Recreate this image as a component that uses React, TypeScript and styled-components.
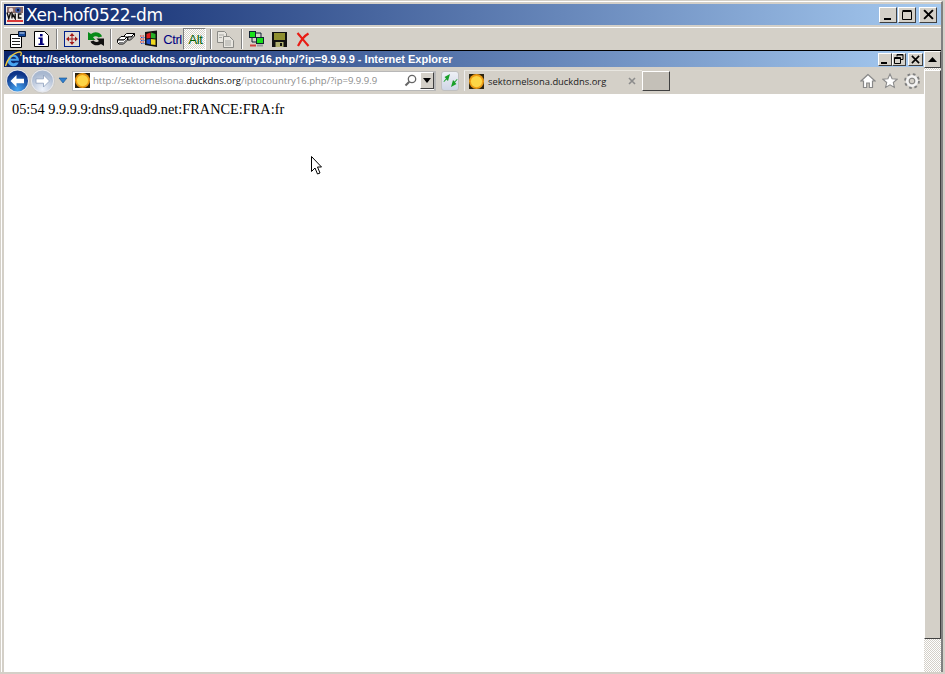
import React from 'react';
import styled, { createGlobalStyle } from 'styled-components';

const GlobalStyle = createGlobalStyle`
  html, body { margin: 0; padding: 0; background: #d4d0c8; overflow: hidden; }
  #root { width: 945px; height: 674px; }
`;

const face = '#d4d0c8';

const Frame = styled.div`
  width: 945px;
  height: 674px;
  box-sizing: border-box;
  padding: 1px 2px 2px 1px;
  background: ${face};
  display: flex;
  flex-direction: column;
  position: relative;
  overflow: hidden;
`;

const Window = styled.div`
  flex: 1;
  min-height: 0;
  display: flex;
  flex-direction: column;
  border-top: 1px solid #fff;
  border-left: 1px solid #fff;
  border-right: 2px solid #808080;
  padding: 2px 0 0 2px;
`;

const TitleBar = styled.div`
  height: 21px;
  flex: none;
  display: flex;
  align-items: center;
  padding: 0 4px 0 2px;
  gap: 2px;
  background: linear-gradient(90deg, #0a246a 0%, #a6caf0 100%);
`;

const TitleText = styled.div`
  flex: 1;
  color: #fff;
  font: 17px 'DejaVu Sans', sans-serif;
  letter-spacing: -0.4px;
  white-space: nowrap;
`;

const WinBtn = styled.div<{ $w: number; $h: number; $gapLeft?: number }>`
  width: ${(p) => p.$w}px;
  height: ${(p) => p.$h}px;
  margin-left: ${(p) => p.$gapLeft ?? 0}px;
  flex: none;
  box-sizing: border-box;
  background: ${face};
  border: 1px solid;
  border-color: #fff #404040 #404040 #fff;
  display: flex;
  align-items: center;
  justify-content: center;
`;

const BtnRow = styled.div<{ $gap: number }>`
  display: flex;
  gap: ${(p) => p.$gap}px;
`;

const Toolbar = styled.div`
  height: 23px;
  flex: none;
  margin-top: 2px;
  border-top: 1px solid #fff;
  display: flex;
  align-items: center;
  padding-left: 2px;
  box-sizing: border-box;
`;

const ToolSlot = styled.div`
  width: 23px;
  height: 22px;
  flex: none;
  display: flex;
  align-items: center;
  justify-content: center;
`;

const Separator = styled.div`
  width: 2px;
  height: 20px;
  margin: 0 2px 0 4px;
  flex: none;
  border-left: 1px solid #808080;
  border-right: 1px solid #fff;
  box-sizing: border-box;
`;

const KeyLabel = styled.span<{ $color: string }>`
  font: 13px 'Liberation Sans', sans-serif;
  color: ${(p) => p.$color};
  letter-spacing: -0.4px;
  margin-left: 2px;
`;

const ActiveKey = styled(ToolSlot)`
  border: 1px solid;
  border-color: #808080 #fff #fff #808080;
  box-sizing: border-box;
  background-color: #fff;
  background-image: conic-gradient(${face} 25%, #fff 0 50%, ${face} 0 75%, #fff 0);
  background-size: 2px 2px;
`;

const Body = styled.div`
  flex: 1;
  min-height: 0;
  display: flex;
  border-top: 1px solid #000;
`;

const Browser = styled.div`
  flex: 1;
  min-width: 0;
  display: flex;
  flex-direction: column;
`;

const InnerTitle = styled.div`
  height: 16px;
  flex: none;
  display: flex;
  align-items: center;
  padding: 0 1px 0 1px;
  background: linear-gradient(90deg, #0a246a 0%, #a6caf0 100%);
`;

const InnerTitleText = styled.div`
  flex: 1;
  color: #fff;
  font: bold 11px 'Liberation Sans', sans-serif;
  white-space: nowrap;
`;

const NavBar = styled.div`
  height: 27px;
  flex: none;
  display: flex;
  align-items: center;
  padding-left: 1px;
`;

const AddressBox = styled.div`
  width: 364px;
  height: 20px;
  margin-left: 4px;
  flex: none;
  box-sizing: border-box;
  background: #fff;
  border: 1px solid #b8b8b8;
  border-right-width: 2px;
  display: flex;
  align-items: center;
  padding-left: 2px;
`;

const AddressText = styled.div`
  flex: 1;
  margin-left: 3px;
  font: 9.52px 'Open Sans', sans-serif;
  color: #8c8c8c;
  white-space: nowrap;
  b { font-weight: normal; color: #111; }
`;

const DropArrow = styled.div`
  width: 14px;
  height: 17px;
  flex: none;
  box-sizing: border-box;
  background: ${face};
  border: 1px solid;
  border-color: #fff #404040 #404040 #fff;
  display: flex;
  align-items: center;
  justify-content: center;
`;

const RefreshBtn = styled.div`
  width: 18px;
  height: 20px;
  margin-left: 5px;
  flex: none;
  box-sizing: border-box;
  border: 1px solid #c0c0c0;
  border-radius: 3px;
  background: linear-gradient(#eef0f6, #cfd6e6);
  display: flex;
  align-items: center;
  justify-content: center;
`;

const Tab = styled.div`
  width: 178px;
  height: 21px;
  margin-left: 5px;
  flex: none;
  box-sizing: border-box;
  border-left: 1px solid #eee;
  border-top: 1px solid #e8e6e0;
  display: flex;
  align-items: center;
  padding-left: 4px;
`;

const TabLabel = styled.div`
  flex: 1;
  margin-left: 4px;
  font: 9.4px 'Open Sans', sans-serif;
  color: #222;
  white-space: nowrap;
`;

const TabClose = styled.div`
  flex: none;
  margin-right: 6px;
  display: flex;
`;

const NewTab = styled.div`
  width: 28px;
  height: 20px;
  flex: none;
  box-sizing: border-box;
  background: #c4c0b8;
  border: 1px solid;
  border-color: #fff #404040 #404040 #fff;
`;

const NavRight = styled.div`
  flex: 1;
  display: flex;
  justify-content: flex-end;
  align-items: center;
  gap: 6px;
  padding-right: 4px;
`;

const Content = styled.div`
  flex: 1;
  background: #fff;
  padding: 7px 8px;
  font: 14.33px 'Liberation Serif', serif;
  color: #000;
  white-space: nowrap;
`;

const Scrollbar = styled.div`
  width: 17px;
  flex: none;
  display: flex;
  flex-direction: column;
  background-color: #fff;
  background-image: conic-gradient(${face} 25%, #fff 0 50%, ${face} 0 75%, #fff 0);
  background-size: 2px 2px;
`;

const ScrollUp = styled.div`
  height: 17px;
  flex: none;
  box-sizing: border-box;
  background: ${face};
  border: 1px solid;
  border-color: #fff #404040 #404040 #fff;
  display: flex;
  align-items: center;
  justify-content: center;
`;

const ScrollThumb = styled.div`
  height: 569px;
  margin-top: 2px;
  flex: none;
  box-sizing: border-box;
  background: ${face};
  border: 1px solid;
  border-color: #fff #404040 #404040 #fff;
`;

const Cursor = styled.svg`
  position: absolute;
  left: 310px;
  top: 155px;
`;

function MinGlyph({ w }: { w: number }) {
  return (
    <svg width="12" height="12" viewBox="0 0 12 12">
      <rect x="2" y="9" width={w} height="2" fill="#000" />
    </svg>
  );
}

function MaxGlyph() {
  return (
    <svg width="12" height="12" viewBox="0 0 12 12">
      <path d="M1.500 2.500h9v8h-9z M1.500 1.500h9" fill="none" stroke="#000" />
    </svg>
  );
}

function RestoreGlyph() {
  return (
    <svg width="10" height="10" viewBox="0 0 10 10">
      <path d="M3 2.500V.5h6v5H7 M3 1h6" fill="none" stroke="#000" />
      <path d="M.5 3.500h6v6h-6zM.5 4.500h6" fill="none" stroke="#000" />
    </svg>
  );
}

function CloseGlyph({ s }: { s: number }) {
  return (
    <svg width={s} height={s} viewBox="0 0 10 10">
      <path d="M1 1l8 8M9 1l-8 8" stroke="#000" strokeWidth="1.800" />
    </svg>
  );
}

function CloseGlyphGrey() {
  return (
    <svg width="8" height="8" viewBox="0 0 8 8">
      <path d="M1 1l6 6M7 1L1 7" stroke="#8c8c8c" strokeWidth="1.600" />
    </svg>
  );
}

function Sun() {
  return (
    <svg width="15" height="15" viewBox="0 0 16 16">
      <rect width="16" height="16" fill="#2c2410" />
      <circle cx="8" cy="8" r="8" fill="#eb9a14" />
      <circle cx="8" cy="8" r="6" fill="#fdd646" />
    </svg>
  );
}

function VncLogo() {
  return (
    <svg width="18" height="18" viewBox="0 0 18 18">
      <rect width="18" height="18" fill="#f0ece8" />
      <rect x="1" y="1" width="16" height="6" fill="#8c6c68" />
      <circle cx="5" cy="4" r="2.200" fill="#e8d8d8" />
      <circle cx="12" cy="4" r="2.800" fill="#3858a8" />
      <circle cx="12" cy="4" r="1.200" fill="#101828" />
      <path d="M1 6.500l1.800 6 1.800-6M6 12.500v-5l3.200 5v-5M15.500 8H12.500v4h3" fill="none" stroke="#111" strokeWidth="1.400" />
      <rect x="1" y="14" width="16" height="2" fill="#d83838" />
    </svg>
  );
}

function PropsIcon() {
  return (
    <svg width="17" height="17" viewBox="0 0 17 17">
      <path d="M1.500 3.500h11v13h-11z" fill="#fff" stroke="#000" />
      <path d="M3 7.500h8M3 10.500h8M3 13.500h8" stroke="#222" />
      <path d="M9.500 .5h7v5h-7z" fill="#144a9e" stroke="#0a1a38" />
      <path d="M10.500 2h5" stroke="#d8e4f4" />
    </svg>
  );
}

function InfoIcon() {
  return (
    <svg width="15" height="16" viewBox="0 0 15 16" style={{ marginLeft: 2 }}>
      <path d="M.5 .5h10l4 4v11H.5z" fill="#fff" stroke="#000" />
      <rect x="6" y="3" width="2.600" height="2.400" fill="#00007a" />
      <path d="M4.500 6.500h4.200v6h1.500v1.500H4.500v-1.500H6V8H4.500z" fill="#00007a" />
    </svg>
  );
}

function FitIcon() {
  return (
    <svg width="16" height="16" viewBox="0 0 16 16">
      <rect x="0.500" y="0.500" width="15" height="15" fill="#e0dcd8" stroke="#00208a" />
      <path d="M8 2l2.500 3h-5zM8 14l2.500-3h-5zM2 8l3-2.500v5zM14 8l-3-2.500v5z" fill="#a01818" />
      <path d="M8 5v6M5 8h6" stroke="#a01818" />
    </svg>
  );
}

function ReloadIcon() {
  return (
    <svg width="18" height="16" viewBox="0 0 18 16" style={{ marginLeft: 2 }}>
      <path d="M15 5.500A6.500 5.500 0 0 0 4 3L1 1v8h7.500L6 6.200A3.500 3 0 0 1 11.500 6.500z" fill="#088a18" />
      <path d="M3.500 10.500a6.500 5.500 0 0 0 10.500 2.500l3 2V7.500h-7.500L12 10a3.500 3 0 0 1-5.500-.5z" fill="#111" />
    </svg>
  );
}

function KeysIcon() {
  return (
    <svg width="18" height="13" viewBox="0 0 18 13">
      <path d="M.5 7L4 3.500h6.500L7 7z" fill="#fff" stroke="#000" />
      <path d="M.5 7v2.500l1.500 1.500h4.500L10.500 7V3.500L7 7z" fill="#fff" stroke="#000" />
      <path d="M2 9.500h4.500L9.500 6.500" fill="none" stroke="#777" />
      <path d="M7 3l2.500-2.500h8L14 4H8z" fill="#fff" stroke="#000" />
      <path d="M11 4v3h2.500l4-4V.5L14 4z" fill="#fff" stroke="#000" />
      <path d="M12.500 5.500h1l2.500-2.500" fill="none" stroke="#777" />
    </svg>
  );
}

function StartIcon() {
  return (
    <svg width="18" height="18" viewBox="0 0 18 18">
      <path d="M5 2l12-1.500V17L5 15z" fill="#111" />
      <path d="M6.500 4l4-1.500v5.500l-4 .5z" fill="#e01e1e" />
      <path d="M11 2.500L15.500 4v4.500L11 8z" fill="#28b028" />
      <path d="M6.500 9.500L10.500 9v5.500l-4-1z" fill="#2050c8" />
      <path d="M11 9l4.500.5V15L11 14.500z" fill="#f0d820" />
      <path d="M0 6h4.500M0 9h4.500M0 12h4.500" stroke="#e01e1e" strokeWidth="1.200" strokeDasharray="1.500 1" />
      <path d="M1 7.500h3.500M1 10.500h3.500M1 13.500h3.500" stroke="#2050c8" strokeDasharray="1.500 1" />
    </svg>
  );
}

function CopyIcon() {
  return (
    <svg width="17" height="17" viewBox="0 0 17 17">
      <path d="M.5 .5h7l2 2v9h-9z" fill="#e8e6e0" stroke="#8a8a86" />
      <path d="M6.500 5.500h6l4 4v7h-10z" fill="#e8e6e0" stroke="#8a8a86" />
      <path d="M2 4h5M2 6.500h3M8 10h6M8 12h6M8 14h6" stroke="#a8a8a4" />
    </svg>
  );
}

function TransferIcon() {
  return (
    <svg width="17" height="17" viewBox="0 0 17 17">
      <rect x="1.500" y="0.500" width="6" height="6" fill="#19e019" stroke="#123" />
      <rect x="8.500" y="6.500" width="7" height="6" fill="#19e019" stroke="#123" />
      <path d="M8 2h5v4M8 11H4V7" fill="none" stroke="#123" />
      <path d="M2 14.500h6" stroke="#d04040" strokeWidth="2" />
      <path d="M9 14.500h6" stroke="#9a9a9a" strokeWidth="2" />
    </svg>
  );
}

function SaveIcon() {
  return (
    <svg width="15" height="15" viewBox="0 0 15 15">
      <path d="M0 0h15v15H0z" fill="#111" />
      <path d="M2 1h11v7H2z" fill="#8f8f30" />
      <path d="M3.500 10h8v5h-8z" fill="#b0b070" />
      <path d="M8 11h2v3H8z" fill="#111" />
    </svg>
  );
}

function RedX() {
  return (
    <svg width="14" height="15" viewBox="0 0 14 15">
      <path d="M1.500 1C5 5 8 9 12.500 14M12.500 1.500C8 4 4.500 9 2 14" fill="none" stroke="#e81c14" strokeWidth="2.200" />
    </svg>
  );
}

function IeLogo() {
  return (
    <svg width="17" height="16" viewBox="0 0 17 16">
      <path d="M8.500 3.500a5.800 5.800 0 1 0 5.200 8h-3a3.200 3.200 0 0 1-5-1.800h8.300A6 6 0 0 0 8.500 3.500zM5.700 7.700a3 3 0 0 1 5.700 0z" fill="#48a4f0" fillRule="evenodd" />
      <path d="M.5 15C2 8.500 8 1.500 15 .8c1.800 0 1.500 2.500.5 4" fill="none" stroke="#f0c838" strokeWidth="1.300" />
    </svg>
  );
}

function NavArrow({ back }: { back?: boolean }) {
  const id = back ? 'navback' : 'navfwd';
  return (
    <svg width="25" height="26" viewBox="0 0 25 26">
      <defs>
        <radialGradient id={id} cx="50%" cy="90%" r="75%">
          <stop offset="0%" stopColor={back ? '#48a8f4' : '#f0f4fc'} />
          <stop offset="100%" stopColor={back ? '#0e3488' : '#a8b8d0'} />
        </radialGradient>
      </defs>
      <circle cx="12.500" cy="13" r="12" fill="#e8e8ea" stroke="#b8b8b8" strokeWidth=".6" />
      <circle cx="12.500" cy="13" r="10.500" fill={`url(#${id})`} />
      <path d="M5.500 13l6-6v3.800H19v4.400h-7.500V19z" transform={back ? undefined : 'rotate(180 12.500 13)'} fill="#fff" stroke={back ? 'none' : '#8ea0bc'} strokeWidth=".8" />
    </svg>
  );
}

function RecentDown() {
  return (
    <svg width="10" height="7" viewBox="0 0 10 7" style={{ marginLeft: 3 }}>
      <path d="M1 1h8L5 6z" fill="#2f7fd0" stroke="#15508c" strokeWidth=".6" />
    </svg>
  );
}

function SearchGlass() {
  return (
    <svg width="13" height="13" viewBox="0 0 13 13" style={{ marginRight: 3 }}>
      <circle cx="8" cy="5" r="3.700" fill="none" stroke="#666" strokeWidth="1.300" />
      <path d="M5.300 7.700L1.500 11.500" stroke="#666" strokeWidth="2" />
    </svg>
  );
}

function SmallArrows() {
  return (
    <svg width="15" height="15" viewBox="0 0 15 15">
      <path d="M7 1L5 8 3.500 6.500 1 9l-.5-.5L3 5.500 1.500 4z" fill="#18a028" />
      <path d="M8 14l2-7 1.500 1.500L14 6l.5.5L12 9.500 13.500 11z" fill="#18a028" />
    </svg>
  );
}

function HomeIcon() {
  return (
    <svg width="16" height="16" viewBox="0 0 16 16">
      <path d="M8 1.500L1 8h2.500v6.500h3.200V10h2.600v4.500h3.200V8H15z" fill="#fff" stroke="#888" strokeWidth="1.200" />
    </svg>
  );
}

function StarIcon() {
  return (
    <svg width="16" height="16" viewBox="0 0 16 16">
      <path d="M8 1l2.100 4.700 5 .5-3.800 3.300 1.100 5L8 11.900l-4.400 2.600 1.100-5L.9 6.200l5-.5z" fill="#fff" stroke="#8c8c8c" strokeWidth="1.100" />
    </svg>
  );
}

function GearIcon() {
  return (
    <svg width="16" height="16" viewBox="0 0 16 16">
      <circle cx="8" cy="8" r="6.400" fill="none" stroke="#808080" strokeWidth="3" strokeDasharray="2.500 2.526" />
      <circle cx="8" cy="8" r="4.800" fill="none" stroke="#f4f4f4" strokeWidth="2.600" />
      <circle cx="8" cy="8" r="2.800" fill={face} stroke="#808080" />
    </svg>
  );
}

function App() {
  return (
    <Frame>
      <GlobalStyle />
      <Window>
        <TitleBar>
          <VncLogo />
          <TitleText>Xen-hof0522-dm</TitleText>
          <BtnRow $gap={1}>
            <WinBtn $w={18} $h={16}><MinGlyph w={7} /></WinBtn>
            <WinBtn $w={18} $h={16}><MaxGlyph /></WinBtn>
            <WinBtn $w={18} $h={16} $gapLeft={2}><CloseGlyph s={11} /></WinBtn>
          </BtnRow>
        </TitleBar>
        <Toolbar>
          <ToolSlot><PropsIcon /></ToolSlot>
          <ToolSlot><InfoIcon /></ToolSlot>
          <Separator />
          <ToolSlot><FitIcon /></ToolSlot>
          <ToolSlot><ReloadIcon /></ToolSlot>
          <Separator />
          <ToolSlot><KeysIcon /></ToolSlot>
          <ToolSlot><StartIcon /></ToolSlot>
          <ToolSlot><KeyLabel $color="#000080">Ctrl</KeyLabel></ToolSlot>
          <ActiveKey><KeyLabel $color="#006000">Alt</KeyLabel></ActiveKey>
          <Separator />
          <ToolSlot><CopyIcon /></ToolSlot>
          <Separator />
          <ToolSlot><TransferIcon /></ToolSlot>
          <ToolSlot><SaveIcon /></ToolSlot>
          <ToolSlot><RedX /></ToolSlot>
        </Toolbar>
        <Body>
          <Browser>
            <InnerTitle>
              <IeLogo />
              <InnerTitleText>
                http://sektornelsona.duckdns.org/iptocountry16.php/?ip=9.9.9.9 - Internet Explorer
              </InnerTitleText>
              <BtnRow $gap={0}>
                <WinBtn $w={14} $h={13}><MinGlyph w={6} /></WinBtn>
                <WinBtn $w={14} $h={13}><RestoreGlyph /></WinBtn>
                <WinBtn $w={15} $h={13} $gapLeft={2}><CloseGlyph s={9} /></WinBtn>
              </BtnRow>
            </InnerTitle>
            <NavBar>
              <NavArrow back />
              <NavArrow />
              <RecentDown />
              <AddressBox>
                <Sun />
                <AddressText>
                  http://sektornelsona.<b>duckdns.org</b>/iptocountry16.php/?ip=9.9.9.9
                </AddressText>
                <SearchGlass />
                <DropArrow>
                  <svg width="8" height="5" viewBox="0 0 8 5"><path d="M0 0h8L4 5z" fill="#000" /></svg>
                </DropArrow>
              </AddressBox>
              <RefreshBtn><SmallArrows /></RefreshBtn>
              <Tab>
                <Sun />
                <TabLabel>sektornelsona.duckdns.org</TabLabel>
                <TabClose><CloseGlyphGrey /></TabClose>
              </Tab>
              <NewTab />
              <NavRight>
                <HomeIcon />
                <StarIcon />
                <GearIcon />
              </NavRight>
            </NavBar>
            <Content>05:54 9.9.9.9:dns9.quad9.net:FRANCE:FRA:fr</Content>
          </Browser>
          <Scrollbar>
            <ScrollUp>
              <svg width="9" height="5" viewBox="0 0 9 5"><path d="M4.500 0l4.500 5H0z" fill="#000" /></svg>
            </ScrollUp>
            <ScrollThumb />
          </Scrollbar>
        </Body>
      </Window>
      <Cursor width="13" height="21" viewBox="0 0 13 21">
        <path d="M1.500 1.500v15l3.500-3.500 2.500 6 2.500-1-2.500-6H11.500z" fill="#fff" stroke="#000" />
      </Cursor>
    </Frame>
  );
}

export default App;
